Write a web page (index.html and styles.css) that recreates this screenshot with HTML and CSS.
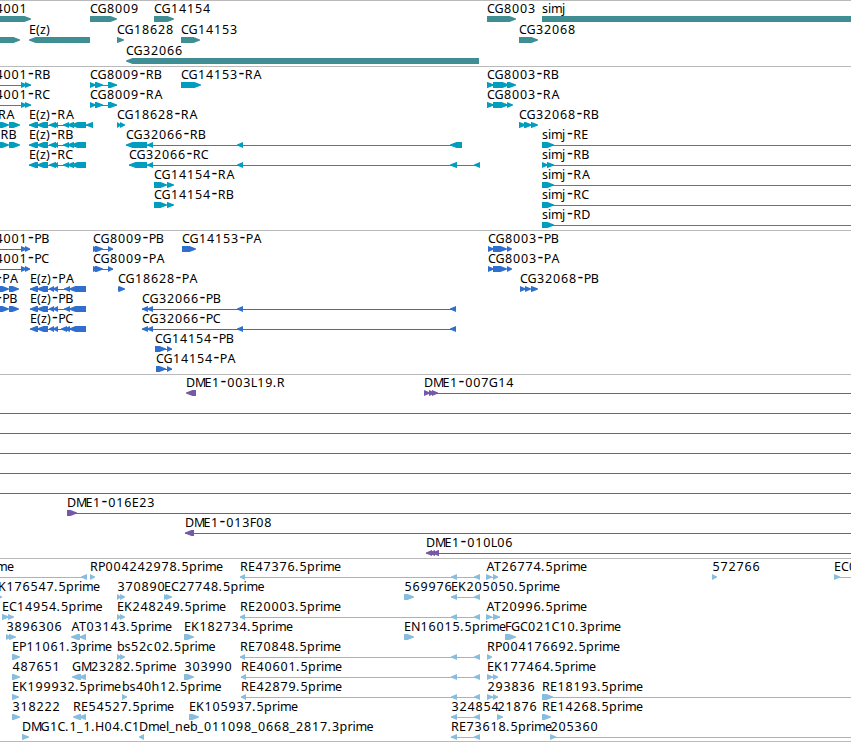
FILE: index.html
```html
<!DOCTYPE html>
<html lang="en">
<head>
<meta charset="utf-8">
<title>Genome tracks</title>
<link rel="stylesheet" href="styles.css">
</head>
<body>
<main class="browser" id="browser"></main>
<script src="tracks.js"></script>
</body>
</html>
```
FILE: styles.css
```css
* { box-sizing: border-box; }
body { margin: 0; background: #fff; }
.browser { display: flex; flex-direction: column; width: 851px; height: 742px; overflow: hidden; border-bottom: 1px solid #bababa; }
.track { display: flex; flex-direction: column; border-top: 1px solid #bababa; padding-bottom: 3px; }
.track-gene, .track-est { padding-bottom: 2px; }
.row { display: block; width: 851px; height: 20px; flex: none; overflow: visible; }
.track-gene .row { height: 21px; }
.row text { font-family: "Noto Sans", "Open Sans", sans-serif; font-size: 12.5px; fill: #000; }
.row .dash { font-size: 18px; }
.track-gene { color: #3e8e93; }
.track-rna { color: #009dbf; }
.track-cds { color: #306fcd; }
.track-bac { color: #7558a6; }
.track-est { color: #87bddd; }
.exon, .intron { fill: currentColor; }
```
FILE: tracks.js
```js
// Advance width of each label character, in pixels.
const ADV = { C: 7.5, G: 9, D: 9, M: 9.5, E: 7, L: 6, R: 8, A: 8, B: 7, P: 7, K: 8, T: 7, N: 9, F: 6, H: 9,
  "-": 7.3, "(": 4, ")": 4, ".": 4, _: 6, z: 6, s: 6, i: 3, m: 11, j: 4, p: 8, r: 5, e: 7, b: 7.5, c: 7, h: 8, l: 3, n: 8 };

// Shift of a glyph inside its advance box.
const SHIFT = { "-": 1, A: 0.6 };

// Feature: [label, label x, direction, exons, intron line [start, end]]
const R = 1, L = -1;
const EZ = [[29, 38], [37, 48], [49, 56], [54, 58], [63, 69], [67, 74], [71, 86]];
const EZP = [[30, 38], [37, 48], [49, 54], [53, 58], [64, 70], [69, 80], [73, 86]];
const pair = [[117, 121], [120, 125]];
const reLong = (name, x) => [name, x, L, [[x, x + 5], [451, 457], [474, 480]], [x, 480]];
const reShort = (name) => [name, 451, L, [[451, 457], [474, 480]], [451, 480]];
const full = [["", 0, R, [], [0, 851]]];

const tracks = [
  ["gene", [
    [["4001", -5, R, [[-20, 31]]], ["CG8009", 90, R, [[90, 117]]], ["CG14154", 154, R, [[154, 174]]],
     ["CG8003", 487, R, [[487, 516]]], ["simj", 542, R, [[542, 870]]]],
    [["", 0, R, [[-9, 20]]], ["E(z)", 29, L, [[29, 90]]], ["CG18628", 117, R, [[117, 124]]],
     ["CG14153", 181, R, [[181, 200]]], ["CG32068", 519, R, [[519, 538]]]],
    [["CG32066", 126, L, [[126, 479]]]]
  ]],
  ["rna", [
    [["4001-RB", -5, R, [[21, 27], [25, 31]], [0, 31]], ["CG8009-RB", 90, R, [[90, 96], [95, 103], [108, 117]], [90, 117]],
     ["CG14153-RA", 181, R, [[181, 201]]], ["CG8003-RB", 487, R, [[487, 494], [493, 509], [507, 516]]]],
    [["4001-RC", -5, R, [[21, 27], [25, 31]], [0, 31]], ["CG8009-RA", 90, R, [[90, 96], [95, 103], [108, 117]], [90, 117]],
     ["CG8003-RA", 487, R, [[487, 494], [493, 508], [507, 513]]]],
    [["RA", -2, R, [[-6, 9], [9, 20]]], ["E(z)-RA", 29, L, [...EZ, [86, 93]], [29, 93]], ["CG18628-RA", 117, R, pair],
     ["CG32068-RB", 519, R, [[519, 526], [524, 532], [531, 538]]]],
    [["RB", 0.5, R, [[-6, 9], [9, 20]]], ["E(z)-RB", 29, L, EZ, [29, 86]],
     ["CG32066-RB", 126, L, [[126, 147], [147, 153], [237, 243], [450, 462]], [126, 462]], ["simj-RE", 542, R, [[542, 554]], [542, 851]]],
    [["E(z)-RC", 29, L, EZ, [29, 86]],
     ["CG32066-RC", 129, L, [[129, 147], [147, 153], [237, 243], [450, 457], [474, 480]], [129, 480]],
     ["simj-RB", 542, R, [[542, 548], [547, 554]], [542, 851]]],
    [["CG14154-RA", 154, R, [[154, 167], [167, 174]]], ["simj-RA", 542, R, [[542, 554]], [542, 851]]],
    [["CG14154-RB", 154, R, [[154, 167], [167, 174]]], ["simj-RC", 542, R, [[542, 554]], [542, 851]]],
    [["simj-RD", 542, R, [[542, 554]], [542, 851]]]
  ]],
  ["cds", [
    [["4001-PB", -5, R, [[21, 27], [25, 30]], [0, 30]], ["CG8009-PB", 93, R, [[93, 99], [95, 103], [108, 113]], [93, 113]],
     ["CG14153-PA", 182, R, [[182, 196]]], ["CG8003-PB", 488, R, [[488, 494], [493, 507], [507, 512]]]],
    [["4001-PC", -5, R, [[21, 27], [25, 30]], [0, 30]], ["CG8009-PA", 93, R, [[93, 99], [95, 103], [108, 113]], [93, 113]],
     ["CG8003-PA", 488, R, [[488, 494], [493, 507], [507, 512]]]],
    [["-PA", -5, R, [[-6, 9], [9, 19]]], ["E(z)-PA", 30, L, EZP, [30, 86]], ["CG18628-PA", 118, R, [[118, 121], [119, 125]]],
     ["CG32068-PB", 520, R, [[520, 526], [525, 531], [531, 538]]]],
    [["-PB", -5, R, [[-6, 9], [9, 19]]], ["E(z)-PB", 30, L, EZP, [30, 86]],
     ["CG32066-PB", 142, L, [[142, 148], [147, 153], [237, 243], [450, 456]], [142, 456]]],
    [["E(z)-PC", 30, L, [...EZP, [61, 67]], [30, 86]],
     ["CG32066-PC", 142, L, [[142, 148], [147, 153], [237, 243], [450, 456]], [142, 456]]],
    [["CG14154-PB", 155, R, [[155, 166], [167, 172]], [155, 172]]],
    [["CG14154-PA", 156, R, [[156, 166], [167, 172]], [156, 172]]]
  ]],
  ["bac", [
    [["DME1-003L19.R", 186, L, [[186, 196]]], ["DME1-007G14", 424, R, [[424, 430], [429, 435], [432, 438]], [424, 851]]],
    full, full, full, full, full,
    [["DME1-016E23", 67, R, [[67, 77]], [67, 851]]],
    [["DME1-013F08", 185, L, [[185, 194]], [185, 851]]],
    [["DME1-010L06", 426, L, [[426, 432], [429, 435], [432, 439]], [426, 851]]]
  ]],
  ["est", [
    [["me", -4, L, [[81, 87]], [0, 87]], ["RP004242978.5prime", 90, R, [[90, 95]]], reLong("RE47376.5prime", 240),
     ["AT26774.5prime", 486, R, [[486, 492], [493, 498]], [486, 498]], ["572766", 712, R, [[712, 717]]], ["EC0", 834, R, [[834, 840]], [834, 851]]],
    [["K176547.5prime", -2, R, [[-3, 2]]], ["370890", 117, R, pair], ["EC27748.5prime", 164, R, [[164, 168], [166, 172]]],
     ["569976", 404, R, [[404, 414]]], reShort("EK205050.5prime")],
    [["EC14954.5prime", 2, R, [[2, 9], [8, 14]]], ["EK248249.5prime", 117, R, pair], reLong("RE20003.5prime", 240),
     ["AT20996.5prime", 486, R, [[486, 492], [493, 500]], [486, 500]]],
    [["3896306", 6, R, [[6, 11], [9, 16]]], ["AT03143.5prime", 71, L, [[71, 80], [79, 86]]], ["EK182734.5prime", 184, R, [[184, 194]]],
     ["EN16015.5prime", 404, R, [[404, 414]]], ["FGC021C10.3prime", 505, R, [[505, 516]]]],
    [["EP11061.3prime", 12, R, [[12, 20]]], ["bs52c02.5prime", 117, R, pair], reLong("RE70848.5prime", 240), ["RP004176692.5prime", 487, R, [[487, 492]]]],
    [["487651", 12, R, [[12, 20]]], ["GM23282.5prime", 72, L, [[72, 81], [79, 86]]], ["303990", 184, R, [[184, 194]]],
     reLong("RE40601.5prime", 241), ["EK177464.5prime", 487, R, [[487, 493], [493, 498]], [487, 498]]],
    [["EK199932.5prime", 12, R, [[12, 19]]], ["bs40h12.5prime", 122, R, [[122, 127]]], reLong("RE42879.5prime", 241),
     ["293836", 487, R, [[487, 493], [493, 498]], [487, 498]], ["RE18193.5prime", 542, R, [[542, 553]], [542, 851]]],
    [["318222", 12, R, [[12, 20]]], ["RE54527.5prime", 73, L, [[73, 81], [79, 86]]], ["EK105937.5prime", 189, R, [[189, 199]]],
     reShort("324854"), ["21876", 497, R, [[497, 503]]], ["RE14268.5prime", 542, R, [[542, 551]]]],
    [["DMG1C.1_1.H04.C1", 22, R, [[22, 29]]], ["Dmel_neb_011098_0668_2817.3prime", 139, L, [[139, 144]]],
     reShort("RE73618.5prime"), ["205360", 550, R, [[550, 556]], [550, 851]]]
  ]]
];

const NS = "http://www.w3.org/2000/svg";
function add(parent, tag, attrs) {
  const el = document.createElementNS(NS, tag);
  for (const k in attrs) el.setAttribute(k, attrs[k]);
  parent.appendChild(el);
  return el;
}

// Box with a pointed end on the strand's side; short exons become plain triangles.
function exonPoints(a, b, dir) {
  const head = Math.min(6.5, b - a);
  return dir === R
    ? `${a},15 ${b - head},15 ${b},17.5 ${b},18.5 ${b - head},21 ${a},21`
    : `${b},15 ${a + head},15 ${a},17.5 ${a},18.5 ${a + head},21 ${b},21`;
}

function drawLabel(svg, label, x) {
  const text = add(svg, "text", { y: 12 });
  let pos = x;
  for (const part of label.split(/(-)/).filter(Boolean)) {
    const xs = [...part].map((c) => {
      const p = pos + (SHIFT[c] ?? (/\d/.test(c) ? 0.4 : 0));
      pos += ADV[c] || 8;
      return p.toFixed(1);
    });
    add(text, "tspan", { x: xs.join(" "), class: part === "-" ? "dash" : "chars" }).textContent = part;
  }
}

const root = document.getElementById("browser");
for (const [kind, rows] of tracks) {
  const section = document.createElement("section");
  section.className = "track track-" + kind;
  for (const features of rows) {
    const svg = add(section, "svg", { class: "row" });
    for (const [label, x, dir, exons, line] of features) {
      if (line) add(svg, "rect", { class: "intron", x: line[0], y: 18, width: line[1] - line[0], height: 1 });
      for (const [a, b] of exons) add(svg, "polygon", { class: "exon", points: exonPoints(a, b, dir) });
      if (label) drawLabel(svg, label, x);
    }
  }
  root.appendChild(section);
}
```
